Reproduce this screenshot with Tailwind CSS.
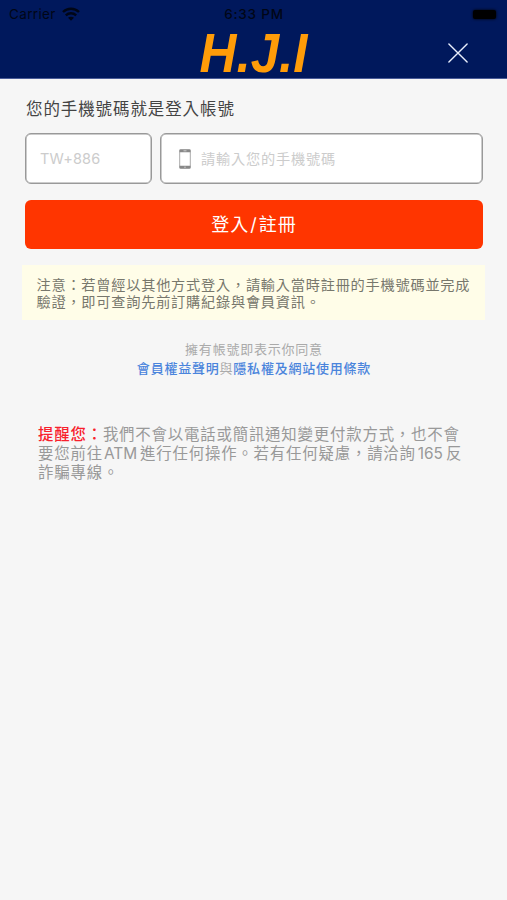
<!DOCTYPE html>
<html lang="zh-Hant">
<head>
  <meta charset="UTF-8" />
  <title>H.J.I</title>
  <meta name="viewport" content="width=device-width, initial-scale=1.0">
  <script src="https://cdn.jsdelivr.net/npm/@tailwindcss/browser@4"></script>
</head>
<body class="bg-[#f6f6f6] min-h-screen overflow-x-hidden font-['Inter','Noto_Sans_CJK_TC',sans-serif]">

  <!-- Header -->
  <header class="h-[79px] bg-[#00185c] border-b border-[#4a5c98]">
    <div class="h-7 pl-[9px] pr-[11px] grid grid-cols-3 items-center text-[#000616]">
      <div class="flex items-center gap-[6px]">
        <span class="text-[13.5px] leading-7 tracking-[0.35px]">Carrier</span>
        <svg class="w-[18px] h-[14px]" viewBox="0 0 18 14" fill="none" stroke="currentColor" stroke-width="2.4">
          <path d="M1 5C5.5 .7 12.5 .7 17 5M3.8 8.3c3-2.7 7.4-2.7 10.4 0" />
          <path d="M9 13.8 6 10.8c1.7-1.5 4.3-1.5 6 0z" fill="currentColor" stroke="none" />
        </svg>
      </div>
      <span class="pl-[3px] text-center text-[13.5px] leading-7 font-medium tracking-[0.8px] whitespace-nowrap">6:33 PM</span>
      <span class="justify-self-end w-[23px] h-[9px] rounded-[2px] bg-black shadow-[0_0_3px_#000]"></span>
    </div>
    <div class="h-[50px] grid grid-cols-3 items-center">
      <h1 class="col-start-2 text-center text-[55px] leading-[50px] font-bold italic text-[#ff9c08] font-['Liberation_Sans',sans-serif] scale-x-93">H.J.I</h1>
      <button class="justify-self-end mr-[39px]" aria-label="關閉">
        <svg class="w-5 h-5" viewBox="0 0 20 20" fill="none" stroke="#e8eefc" stroke-width="1.4" stroke-linecap="round">
          <path d="M.9.9 19.1 19.1M19.1.9.9 19.1" />
        </svg>
      </button>
    </div>
  </header>

  <main class="pl-[25px] pr-[24px] pt-[18px]">
    <h2 class="pl-px text-[16.5px] leading-6 tracking-[0.9px] text-[#444]">您的手機號碼就是登入帳號</h2>

    <!-- Phone number -->
    <div class="flex gap-2 mt-3 text-[#ccc]">
      <div class="w-[127px] h-[51px] pl-[14px] flex items-center bg-white border border-[#999] shadow-[inset_0_0_0_0.5px_#999] rounded-md text-[14.5px] tracking-[0.15px]">TW+886</div>
      <div class="flex-1 h-[51px] pl-[18px] flex items-center gap-[10px] bg-white border border-[#999] shadow-[inset_0_0_0_0.5px_#999] rounded-md text-[14.2px] tracking-[0.8px]">
        <svg class="w-3 h-5" viewBox="0 0 12 20" fill="none">
          <rect x=".7" y=".7" width="10.6" height="18.6" rx="1" stroke="#aaa" stroke-width="1" />
          <path d="M.5 1.8h11M.5 18.2h11" stroke="#888" stroke-width="2.8" />
          <path d="M4.5 1.8h3M5.2 18.2h1.6" stroke="#ccc" stroke-width="1" />
        </svg>
        <span>請輸入您的手機號碼</span>
      </div>
    </div>

    <button class="block w-full h-[49px] mt-4 rounded-md bg-[#ff3500] text-white text-[18px] tracking-[1px]">登入<span class="px-px">/</span>註冊</button>

    <!-- Notice -->
    <p class="-ml-[3px] -mr-[2px] mt-4 h-[55px] pl-[14.5px] pt-[11px] bg-[#fffde8] text-[#77776c] text-[14.2px] leading-[17px] tracking-[0.77px] whitespace-nowrap">注意：若曾經以其他方式登入，請輸入當時註冊的手機號碼並完成<br>驗證，即可查詢先前訂購紀錄與會員資訊。</p>

    <!-- Terms -->
    <p class="mt-5 text-center text-[#aaa] text-[13px] leading-[19px] tracking-[0.78px]">擁有帳號即表示你同意<br><a href="#" class="font-medium text-[#4a84dc]">會員權益聲明</a>與<a href="#" class="font-medium text-[#4a84dc]">隱私權及網站使用條款</a></p>

    <p class="mt-[47px] pl-[13px] text-[#999] text-[15.4px] leading-[19px] tracking-[0.83px] whitespace-nowrap"><span class="font-medium text-[#f8202c]">提醒您：</span>我們不會以電話或簡訊通知變更付款方式，也不會<br>要您前往<span class="ml-px mr-[3px] tracking-[0px]">ATM</span>進行任何操作。若有任何疑慮，請洽詢<span class="ml-[2px] mr-[3px] tracking-[0px]">165</span>反<br>詐騙專線。</p>
  </main>

</body>
</html>
